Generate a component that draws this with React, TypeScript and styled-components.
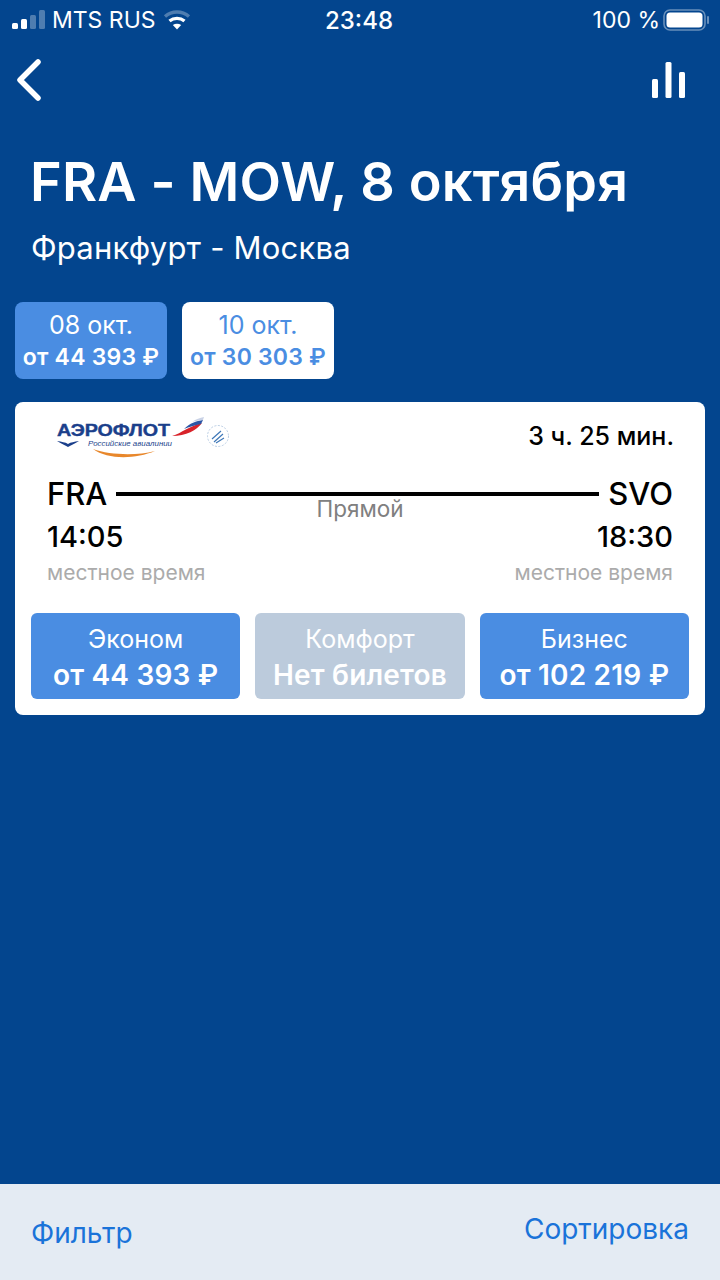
import styled, { createGlobalStyle } from 'styled-components';

const GlobalStyle = createGlobalStyle`
  html, body {
    margin: 0;
    padding: 0;
    background: #03458e;
  }
  * {
    box-sizing: border-box;
  }
`;

const Page = styled.div`
  width: 720px;
  height: 1280px;
  display: flex;
  flex-direction: column;
  overflow: hidden;
  background: #03458e;
  color: #fff;
  font-family: Inter, 'Liberation Sans', sans-serif;
`;

const StatusBar = styled.div`
  height: 40px;
  padding: 0 10px 0 12px;
  display: grid;
  grid-template-columns: 1fr auto 1fr;
  align-items: center;
  font-size: 23px;
`;

const StatusSide = styled.div<{ $end?: boolean }>`
  display: flex;
  align-items: center;
  gap: ${(p) => (p.$end ? 3 : 7)}px;
  justify-content: ${(p) => (p.$end ? 'flex-end' : 'flex-start')};
`;

const Clock = styled.div`
  margin-right: 4px;
  font-size: 24px;
  font-weight: 500;
`;

const NavBar = styled.div`
  height: 80px;
  padding: 0 35px 0 15px;
  display: flex;
  align-items: center;
  justify-content: space-between;
`;

const Title = styled.h1`
  margin: 26px 0 0 30px;
  font-size: 54px;
  line-height: 72px;
  font-weight: 600;
  letter-spacing: 0.15px;
  white-space: nowrap;
`;

const Subtitle = styled.div`
  margin: 10px 0 0 31px;
  font-size: 31px;
  line-height: 40px;
  letter-spacing: 0.2px;
`;

const DateRow = styled.div`
  display: flex;
  gap: 15px;
  margin: 34px 0 0 15px;
`;

const DateTab = styled.div<{ $active?: boolean }>`
  width: 152px;
  height: 77px;
  border-radius: 8px;
  display: flex;
  flex-direction: column;
  align-items: center;
  justify-content: center;
  background: ${(p) => (p.$active ? '#4a8de2' : '#fff')};
  color: ${(p) => (p.$active ? '#fff' : '#4a8de2')};
`;

const DateLabel = styled.div`
  font-size: 25px;
  line-height: 31px;
`;

const DatePrice = styled.div`
  margin-top: 2px;
  font-size: 23px;
  line-height: 29px;
  font-weight: 600;
  letter-spacing: 0.2px;
  white-space: nowrap;
`;

const FlightCard = styled.div`
  margin: 23px 15px 0;
  height: 313px;
  padding: 0 16px;
  background: #fff;
  border-radius: 8px;
  color: #000;
  display: flex;
  flex-direction: column;
`;

const CardHead = styled.div`
  height: 67px;
  padding: 0 15px 0 25px;
  display: flex;
  align-items: center;
  justify-content: space-between;
`;

const Duration = styled.div`
  font-size: 25px;
  font-weight: 500;
  margin-top: 1px;
`;

const RouteRow = styled.div`
  position: relative;
  padding: 0 16px;
  display: flex;
  align-items: center;
  gap: 9px;
  height: 49px;
  font-size: 31px;
  font-weight: 500;
`;

const RouteLine = styled.div`
  flex: 1;
  height: 4px;
  background: #000;
`;

const Direct = styled.div`
  position: absolute;
  left: 0;
  right: 0;
  top: 26px;
  text-align: center;
  font-size: 22.5px;
  font-weight: 400;
  color: #808080;
`;

const TimeRow = styled.div`
  padding: 0 16px;
  height: 36px;
  display: flex;
  align-items: center;
  justify-content: space-between;
  font-size: 29px;
  font-weight: 500;
`;

const NoteRow = styled(TimeRow)`
  height: 36px;
  font-size: 21px;
  font-weight: 400;
  color: #ababab;
`;

const FareRow = styled.div`
  margin-top: 23px;
  display: grid;
  grid-template-columns: repeat(3, 1fr);
  gap: 15px;
`;

const Fare = styled.div<{ $off?: boolean }>`
  height: 86px;
  border-radius: 6px;
  display: flex;
  flex-direction: column;
  align-items: center;
  justify-content: center;
  color: #fff;
  background: ${(p) => (p.$off ? '#bccbdc' : '#4a8de2')};
`;

const FareName = styled.div`
  font-size: 25px;
  line-height: 36px;
  margin-top: 2px;
`;

const FarePrice = styled.div`
  font-size: 28px;
  line-height: 36px;
  font-weight: 600;
  letter-spacing: 0.2px;
  white-space: nowrap;
`;

const Spacer = styled.div`
  flex: 1;
`;

const BottomBar = styled.div`
  height: 96px;
  padding: 0 31px;
  background: #e4ebf3;
  color: #1a73d9;
  display: flex;
  justify-content: space-between;
  font-size: 28px;
`;

const BarAction = styled.div<{ $top: number }>`
  margin-top: ${(p) => p.$top}px;
`;

const LogoText = styled.text`
  font-family: 'Liberation Sans', sans-serif;
`;

function Signal() {
  return (
    <svg width="33" height="20" viewBox="0 0 33 20" fill="#fff">
      <rect x="0" y="13" width="6" height="6" rx="1.5" />
      <rect x="9" y="9" width="6" height="10" rx="1.5" />
      <rect x="18" y="5" width="6" height="14" rx="1.5" opacity="0.3" />
      <rect x="27" y="0" width="6" height="19" rx="1.5" opacity="0.3" />
    </svg>
  );
}

function Wifi() {
  return (
    <svg width="28" height="22" viewBox="0 0 28 22" fill="none" stroke="#fff" strokeWidth="3.4">
      <path d="M2 7.5C9 1.5 19 1.5 26 7.5" opacity="0.3" />
      <path d="M6.5 12C10.8 8.5 17.2 8.5 21.5 12" />
      <path d="M14 20.5L9.8 16C12.2 14.3 15.8 14.3 18.2 16Z" fill="#fff" stroke="none" />
    </svg>
  );
}

function Battery() {
  return (
    <svg width="47" height="22" viewBox="0 0 47 22">
      <rect x="1" y="1" width="41" height="20" rx="6" fill="none" stroke="#fff" strokeOpacity="0.4" strokeWidth="1.6" />
      <rect x="3.5" y="3.5" width="36" height="15" rx="3.5" fill="#fff" />
      <rect x="44" y="7" width="2" height="8" rx="1" fill="#fff" fillOpacity="0.4" />
    </svg>
  );
}

function BackIcon() {
  return (
    <svg width="28" height="44" viewBox="0 0 28 44" fill="none" stroke="#fff" strokeWidth="5.5" strokeLinecap="round" strokeLinejoin="round">
      <path d="M23 4L5 22L23 40" />
    </svg>
  );
}

function StatsIcon() {
  return (
    <svg width="33" height="36" viewBox="0 0 33 36" fill="#fff">
      <rect x="0" y="17" width="6" height="19" rx="1.5" />
      <rect x="13.5" y="0" width="6" height="36" rx="1.5" />
      <rect x="27" y="10" width="6" height="26" rx="1.5" />
    </svg>
  );
}

function AeroflotLogo() {
  return (
    <svg width="182" height="56" viewBox="0 0 182 56">
      <LogoText x="1" y="27.5" fontSize="16" fontWeight="700" fill="#1b3f8b" stroke="#1b3f8b" strokeWidth="0.4" textLength="113" lengthAdjust="spacingAndGlyphs">
        АЭРОФЛОТ
      </LogoText>
      <path d="M116 28C126 25 133 18 146 15C141 22 130 28 116 28Z" fill="#d8232a" />
      <path d="M128 21C134 15 140 13 147 12L145 16C139 17 133 19 128 21Z" fill="#2b56a5" />
      <path d="M136 14C140 11 144 10 148 9L147 12C143 12 139 13 136 14Z" fill="#c9d2e6" />
      <path d="M1 33C6 34 9 34 12 36C15 34 18 34 23 33C18 36 15 37 12 39C9 37 6 36 1 33Z" fill="#1b3f8b" />
      <LogoText x="32" y="38" fontSize="8" fontStyle="italic" fill="#1b3f8b" textLength="84" lengthAdjust="spacingAndGlyphs">
        Российские авиалинии
      </LogoText>
      <path d="M37 41C52 52 80 51 99 43C80 48 54 47 37 41Z" fill="#e8872b" />
      <circle cx="162" cy="28" r="10.5" fill="#fff" stroke="#b9cde4" strokeWidth="1" strokeDasharray="2 1.5" />
      <path d="M156 31L165 23M158 34L167 26M160 35L168 30" stroke="#3f78b8" strokeWidth="1.2" />
    </svg>
  );
}

const fares = [
  { name: 'Эконом', price: 'от 44 393 ₽' },
  { name: 'Комфорт', price: 'Нет билетов', off: true },
  { name: 'Бизнес', price: 'от 102 219 ₽' },
];

export default function App() {
  return (
    <>
      <GlobalStyle />
      <Page>
        <StatusBar>
          <StatusSide>
            <Signal />
            MTS RUS
            <Wifi />
          </StatusSide>
          <Clock>23:48</Clock>
          <StatusSide $end>
            100 %
            <Battery />
          </StatusSide>
        </StatusBar>
        <NavBar>
          <BackIcon />
          <StatsIcon />
        </NavBar>
        <Title>FRA - MOW, 8 октября</Title>
        <Subtitle>Франкфурт - Москва</Subtitle>
        <DateRow>
          <DateTab $active>
            <DateLabel>08 окт.</DateLabel>
            <DatePrice>от 44 393 ₽</DatePrice>
          </DateTab>
          <DateTab>
            <DateLabel>10 окт.</DateLabel>
            <DatePrice>от 30 303 ₽</DatePrice>
          </DateTab>
        </DateRow>
        <FlightCard>
          <CardHead>
            <AeroflotLogo />
            <Duration>3 ч. 25 мин.</Duration>
          </CardHead>
          <RouteRow>
            FRA
            <RouteLine />
            SVO
            <Direct>Прямой</Direct>
          </RouteRow>
          <TimeRow>
            <span>14:05</span>
            <span>18:30</span>
          </TimeRow>
          <NoteRow>
            <span>местное время</span>
            <span>местное время</span>
          </NoteRow>
          <FareRow>
            {fares.map((f) => (
              <Fare key={f.name} $off={f.off}>
                <FareName>{f.name}</FareName>
                <FarePrice>{f.price}</FarePrice>
              </Fare>
            ))}
          </FareRow>
        </FlightCard>
        <Spacer />
        <BottomBar>
          <BarAction $top={32}>Фильтр</BarAction>
          <BarAction $top={28}>Сортировка</BarAction>
        </BottomBar>
      </Page>
    </>
  );
}
